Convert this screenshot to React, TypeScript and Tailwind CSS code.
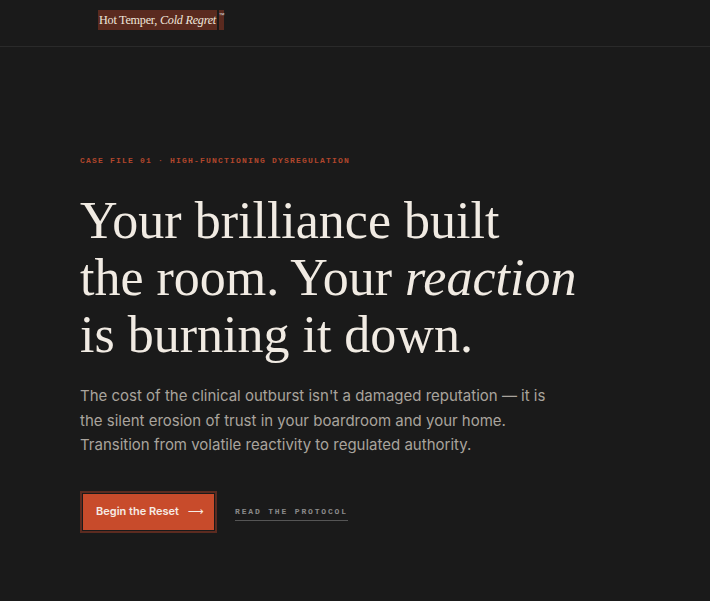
import React from "react";

export default function App() {
  return (
    <div className="min-h-[601px] w-full bg-[#1a1a1a] text-[#efe9e1]">
      <header className="h-[47px] border-b border-[#2a2a2a] flex items-start pt-[10px] pl-[98px]">
        <div className="flex items-start">
          <span className="h-[20px] flex items-center bg-[#5a2a1f] px-[1px] text-[12.2px] text-[#eee6dc] tracking-[-0.25px] font-['Liberation_Serif',serif]">
            Hot Temper, <i className="ml-[3px]">Cold Regret</i>
          </span>
          <span className="ml-[2px] h-[20px] w-[5px] bg-[#5a2a1f] text-[6px] leading-[10px] text-[#ddd] flex justify-center font-['Liberation_Sans',sans-serif]">
            ™
          </span>
        </div>
      </header>

      <main className="pl-[80px] pt-[109px]">
        <div className="text-[8px] leading-[10px] tracking-[0.15em] text-[#b0462c] font-bold font-['Liberation_Mono',monospace]">
          CASE FILE 01 · HIGH-FUNCTIONING DYSREGULATION
        </div>

        <h1 className="mt-[26px] text-[52px] leading-[57px] text-[#f1ebe3] font-normal whitespace-nowrap font-['Liberation_Serif',serif]">
          Your brilliance built
          <br />
          the room. Your <i>reaction</i>
          <br />
          is burning it down.
        </h1>

        <p className="mt-[21px] w-[480px] text-[15px] leading-[24.5px] text-[#a9a49d] font-['Inter','Liberation_Sans',sans-serif]">
          The cost of the clinical outburst isn't a damaged reputation — it is
          the silent erosion of trust in your boardroom and your home.
          Transition from volatile reactivity to regulated authority.
        </p>

        <div className="mt-[33px] flex items-center">
          <button className="h-[42px] w-[137px] border-2 border-[#5c2b20] bg-[#1a1a1a] p-px font-['Inter','Liberation_Sans',sans-serif]">
            <span className="flex h-full w-full items-center bg-[#c84b2b] pl-[13px] text-[11px] font-semibold text-[#f6ece6]">
              Begin the Reset
              <span className="ml-[9px] text-[11px] font-normal leading-none font-['DejaVu_Sans',sans-serif]">
                ⟶
              </span>
            </span>
          </button>

          <a className="ml-[18px] mt-[5px] border-b border-[#555] pb-[3px] text-[8px] leading-[10px] tracking-[0.23em] font-bold text-[#8a8a8a] font-['Liberation_Mono',monospace]">
            READ THE PROTOCOL
          </a>
        </div>
      </main>
    </div>
  );
}
